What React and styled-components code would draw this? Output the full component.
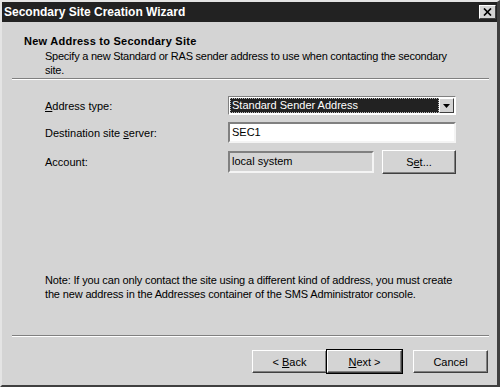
import styled, { createGlobalStyle } from "styled-components";

const Global = createGlobalStyle`
  html, body {
    margin: 0;
    padding: 0;
    background: #d4d4d4;
  }
  body {
    font-family: "Liberation Sans", Arial, sans-serif;
    font-size: 11px;
    color: #000;
  }
`;

const Window = styled.div`
  box-sizing: border-box;
  width: 500px;
  height: 387px;
  background: #d4d4d4;
  border-top: 2px solid #e4e4e4;
  border-left: 2px solid #e4e4e4;
  border-right: 3px solid #404040;
  border-bottom: 2px solid #404040;
  display: flex;
  flex-direction: column;
  overflow: hidden;
`;

const TitleBar = styled.div`
  height: 20px;
  background: #222222;
  color: #fff;
  display: flex;
  align-items: center;
  justify-content: space-between;
  padding: 0 1px 0 2px;
  flex-shrink: 0;
`;

const TitleText = styled.span`
  font-family: "Liberation Sans", Arial, sans-serif;
  font-weight: bold;
  font-size: 12px;
`;

const CloseBox = styled.div`
  box-sizing: border-box;
  width: 17px;
  height: 14px;
  background: #d4d4d4;
  border-top: 1px solid #fff;
  border-left: 1px solid #fff;
  border-right: 1px solid #404040;
  border-bottom: 1px solid #404040;
  display: flex;
  align-items: center;
  justify-content: center;
`;

const Header = styled.div`
  height: 56px;
  padding: 13px 0 0 22px;
  box-sizing: border-box;
`;

const HeaderTitle = styled.div`
  font-family: "Liberation Sans", Arial, sans-serif;
  font-weight: bold;
  font-size: 11px;
  line-height: 13px;
  letter-spacing: 0.25px;
`;

const HeaderText = styled.div`
  padding-left: 21px;
  line-height: 14px;
  margin-top: 1px;
  letter-spacing: -0.24px;
`;

const Separator = styled.div`
  height: 0;
  border-top: 1px solid #808080;
  border-bottom: 1px solid #ffffff;
  margin: 0 8px 0 10px;
  flex-shrink: 0;
`;

const Form = styled.div`
  display: grid;
  grid-template-columns: 183px 228px;
  row-gap: 7px;
  padding: 16px 0 0 43px;
  align-items: center;
`;

const Label = styled.div`
  line-height: 14px;
`;

const U = styled.span`
  text-decoration: underline;
`;

const Combo = styled.div`
  box-sizing: border-box;
  height: 19px;
  background: #fff;
  border-top: 1px solid #808080;
  border-left: 1px solid #808080;
  border-right: 1px solid #fff;
  border-bottom: 1px solid #fff;
  display: flex;
  padding: 1px;
`;

const ComboValue = styled.div`
  flex: 1;
  background: #222;
  color: #fff;
  outline: 1px dotted #bbb;
  outline-offset: -1px;
  padding-left: 2px;
  line-height: 15px;
`;

const ComboButton = styled.div`
  box-sizing: border-box;
  width: 15px;
  background: #d4d4d4;
  border-top: 1px solid #fff;
  border-left: 1px solid #fff;
  border-right: 1px solid #404040;
  border-bottom: 1px solid #404040;
  display: flex;
  align-items: center;
  justify-content: center;
`;

const Field = styled.div`
  box-sizing: border-box;
  height: ${(p) => (p.$short ? "22px" : "21px")};
  width: ${(p) => (p.$short ? "146px" : "auto")};
  background: ${(p) => (p.$disabled ? "#d4d4d4" : "#fff")};
  border-top: 2px solid #808080;
  border-left: 2px solid #808080;
  border-right: 2px solid #f4f4f4;
  border-bottom: 2px solid #f4f4f4;
  padding-left: 2px;
  line-height: 17px;
`;

const AccountRow = styled.div`
  display: flex;
  align-items: center;
  justify-content: space-between;
`;

const Button = styled.div`
  box-sizing: border-box;
  width: ${(p) => p.$w || "75px"};
  height: ${(p) => p.$h || "23px"};
  background: #d4d4d4;
  border-top: 1px solid #fff;
  border-left: 1px solid #fff;
  border-right: 1px solid #404040;
  border-bottom: 1px solid #404040;
  box-shadow: ${(p) =>
    p.$default ? "0 0 0 1px #000, inset -1px -1px 0 #808080" : "inset -1px -1px 0 #808080"};
  display: flex;
  align-items: center;
  justify-content: center;
  line-height: 14px;
`;

const Spacer = styled.div`
  flex: 1;
`;

const Note = styled.div`
  padding: 0 0 34px 43px;
  line-height: 14px;
  letter-spacing: -0.15px;
`;

const Footer = styled.div`
  display: flex;
  justify-content: flex-end;
  padding: 13px 9px 11px 0;
  height: 48px;
  box-sizing: border-box;
`;

const ButtonPair = styled.div`
  display: flex;
  margin-right: 11px;
`;

export default function App() {
  return (
    <>
      <Global />
      <Window>
        <TitleBar>
          <TitleText>Secondary Site Creation Wizard</TitleText>
          <CloseBox>
            <svg width="9" height="8" viewBox="0 0 9 8">
              <path d="M1 0.5 L8 7.5 M8 0.5 L1 7.5" stroke="#000" strokeWidth="1.7" />
            </svg>
          </CloseBox>
        </TitleBar>
        <Header>
          <HeaderTitle>New Address to Secondary Site</HeaderTitle>
          <HeaderText>
            Specify a new Standard or RAS sender address to use when contacting the secondary
            <br />
            site.
          </HeaderText>
        </Header>
        <Separator />
        <Form>
          <Label>
            <U>A</U>ddress type:
          </Label>
          <Combo>
            <ComboValue>Standard Sender Address</ComboValue>
            <ComboButton>
              <svg width="7" height="4" viewBox="0 0 7 4">
                <path d="M0 0 H7 L3.5 4 Z" fill="#000" />
              </svg>
            </ComboButton>
          </Combo>
          <Label>
            Destination site <U>s</U>erver:
          </Label>
          <Field>SEC1</Field>
          <Label>Account:</Label>
          <AccountRow>
            <Field $short $disabled>
              local system
            </Field>
            <Button $h="24px" $w="74px">
              <span>
                S<U>e</U>t...
              </span>
            </Button>
          </AccountRow>
        </Form>
        <Spacer />
        <Note>
          Note: If you can only contact the site using a different kind of address, you must create
          <br />
          the new address in the Addresses container of the SMS Administrator console.
        </Note>
        <Separator />
        <Footer>
          <ButtonPair>
            <Button>
              <span>
                &lt; <U>B</U>ack
              </span>
            </Button>
            <Button $default>
              <span>
                <U>N</U>ext &gt;
              </span>
            </Button>
          </ButtonPair>
          <Button>Cancel</Button>
        </Footer>
      </Window>
    </>
  );
}
